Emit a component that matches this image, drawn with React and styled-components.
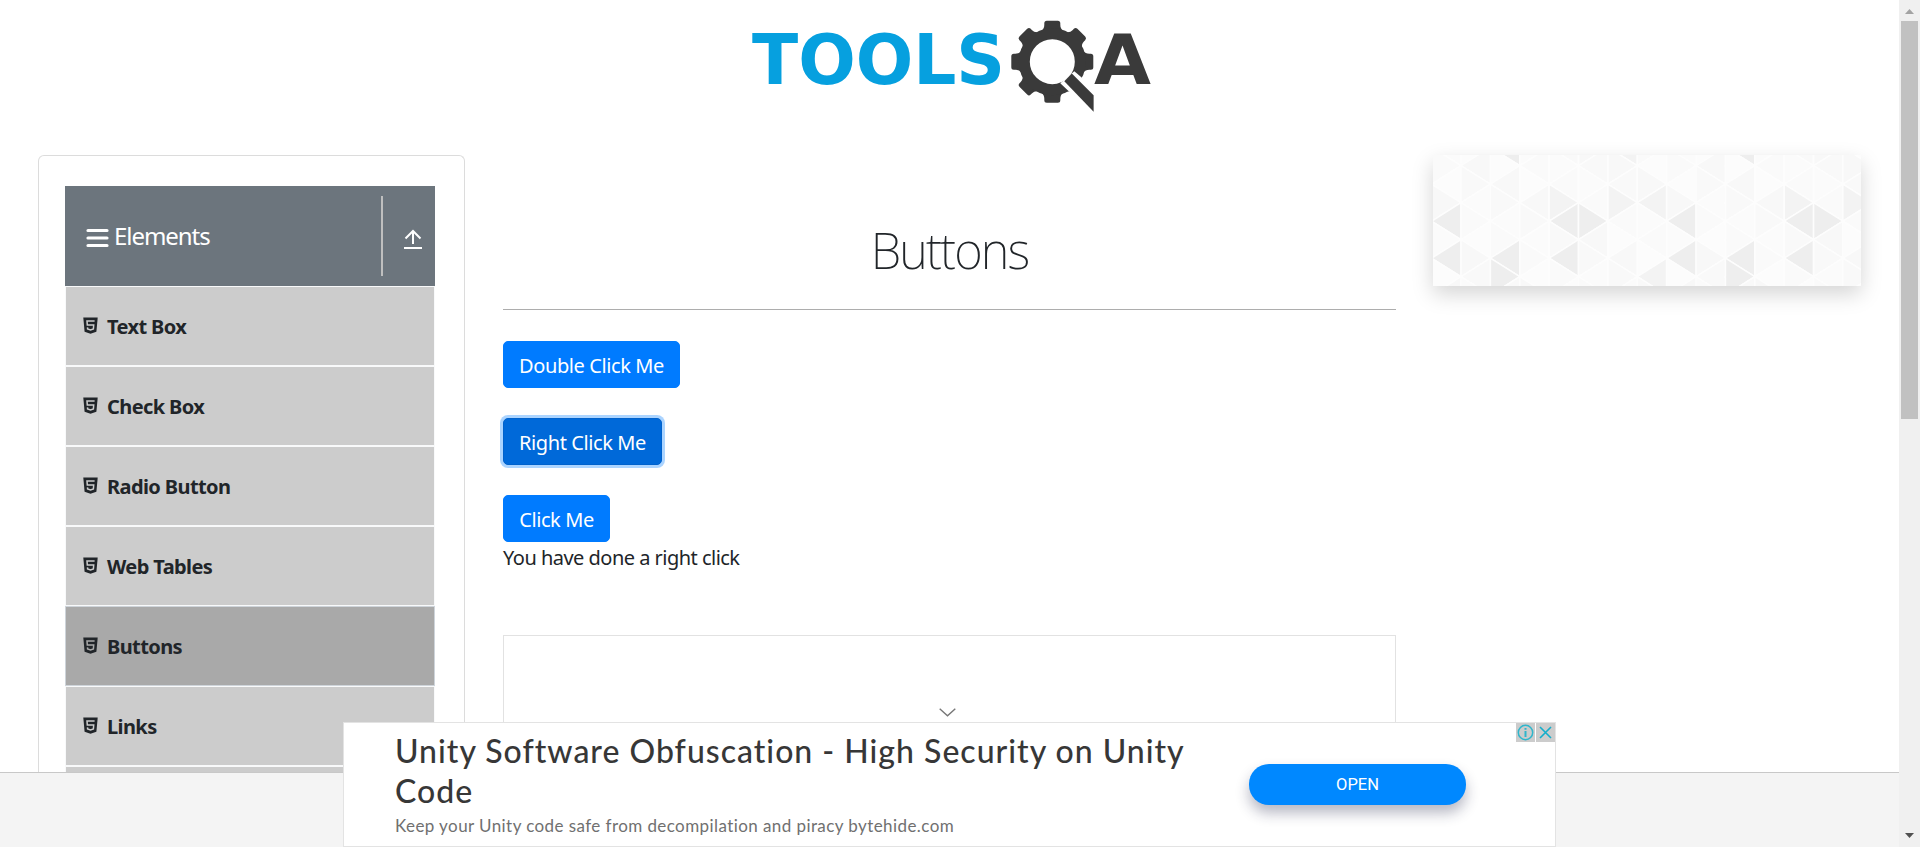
import React from 'react';
import styled, { createGlobalStyle } from 'styled-components';

const GlobalStyle = createGlobalStyle`
  * { box-sizing: border-box; }
  html, body { margin: 0; height: 100%; overflow: hidden; }
  body {
    background: #fff;
    color: #212529;
    font: 400 20px/30px 'Noto Sans', 'Open Sans', sans-serif;
  }
`;

const Screen = styled.div`
  display: flex;
  width: 1920px;
  height: 847px;
  overflow: hidden;
`;

const Page = styled.div`
  position: relative;
  flex: 1;
  display: flex;
  flex-direction: column;
  min-width: 0;
`;

const Header = styled.header`
  flex: none;
  height: 155px;
  padding: 15px 0 0 746px;
  svg { display: block; }
`;

const Columns = styled.div`
  flex: none;
  height: 617px;
  display: flex;
  align-items: flex-start;
  padding: 0 38px;
`;

const SideCard = styled.aside`
  width: 427px;
  height: 617px;
  padding: 30px 29px 0 26px;
  border: 1px solid #dcdcdc;
  border-bottom: 0;
  border-radius: 6px 6px 0 0;
  overflow: hidden;
`;

const GroupHeader = styled.div`
  display: flex;
  width: 370px;
  height: 100px;
  padding: 10px 0;
  background: #6c757d;
  color: #fff;
`;

const GroupTitle = styled.div`
  flex: 1;
  display: flex;
  align-items: center;
  padding: 0 0 1px 21px;
  border-right: 2px solid #bfbfbf;
  font-size: 24px;
  letter-spacing: -1.05px;
  svg { margin: 4px 5px 0 0; }
`;

const GroupArrow = styled.div`
  width: 52px;
  padding: 32px 0 0 19px;
`;

const MenuList = styled.ul`
  width: 370px;
  margin: 0;
  padding: 0;
  list-style: none;
`;

const MenuItem = styled.li`
  display: flex;
  align-items: center;
  height: 80px;
  padding: 2px 0 0 17px;
  border: 1px solid ${(p) => (p.$active ? '#ced4da' : '#f8f9fa')};
  background: ${(p) => (p.$active ? '#a9a9a9' : '#ccc')};
  font-weight: 700;
  letter-spacing: -0.6px;
  svg { margin: 0 9px 4px 0; }
`;

const Main = styled.main`
  width: 893px;
  height: 617px;
  margin-left: 38px;
  display: flex;
  flex-direction: column;
  align-items: flex-start;
`;

const Title = styled.h1`
  width: 100%;
  height: 155px;
  margin: 0;
  padding: 65px 0 0;
  border-bottom: 1px solid #adadad;
  text-align: center;
  font-size: 49px;
  line-height: 60px;
  font-weight: 200;
  letter-spacing: -1.9px;
`;

const PrimaryButton = styled.button`
  width: ${(p) => p.$width}px;
  height: 47px;
  margin: ${(p) => p.$gap}px 0 0;
  padding: 2px 0 0;
  border: 1px solid ${(p) => (p.$focus ? '#0062cc' : '#007bff')};
  border-radius: 5px;
  background: ${(p) => (p.$focus ? '#0069d9' : '#007bff')};
  box-shadow: ${(p) => (p.$focus ? '0 0 0 3px rgba(0, 123, 255, .33)' : 'none')};
  color: #fff;
  font: inherit;
  letter-spacing: -0.4px;
  white-space: nowrap;
`;

const Message = styled.p`
  margin: 1px 0 0;
  letter-spacing: -0.52px;
`;

const AdSlot = styled.div`
  width: 100%;
  flex: 1;
  margin-top: 62px;
  padding: 72px 0 0 435px;
  border: 1px solid #e2e2e2;
  border-bottom: 0;
  svg { display: block; }
`;

const Banner = styled.div`
  width: 428px;
  height: 131px;
  margin-left: 37px;
  background: #fff;
  box-shadow: 0 8px 20px rgba(0, 0, 0, .17);
  svg { display: block; }
`;

const Footer = styled.footer`
  flex: 1;
  border-top: 1px solid #c8c8c8;
  background: #f4f4f4;
`;

const StickyAd = styled.section`
  position: absolute;
  left: 343px;
  top: 722px;
  width: 1213px;
  height: 125px;
  display: flex;
  border: 1px solid #e3e3e3;
  background: #fff;
  font-family: Lato, sans-serif;
`;

const AdCopy = styled.div`
  width: 905px;
  padding: 8px 0 0 51px;
`;

const AdTitle = styled.div`
  height: 80px;
  color: #373737;
  font-size: 32px;
  line-height: 40px;
  font-weight: 500;
  letter-spacing: 1px;
  white-space: nowrap;
`;

const AdText = styled.div`
  color: #707070;
  font-size: 17px;
  line-height: 30px;
  letter-spacing: 0.42px;
  white-space: nowrap;
`;

const OpenButton = styled.button`
  width: 217px;
  height: 41px;
  margin-top: 41px;
  padding: 0;
  border: 0;
  border-radius: 20px;
  background: #08f;
  box-shadow: 0 8px 14px rgba(30, 35, 70, .32);
  color: #fff;
  font: 400 16.5px/41px Roboto, sans-serif;
  letter-spacing: 0;
`;

const AdBadges = styled.div`
  display: flex;
  gap: 1px;
  margin-left: auto;
`;

const Badge = styled.span`
  display: flex;
  align-items: center;
  justify-content: center;
  width: 19px;
  height: 19px;
  background: #ccc;
`;

const Scrollbar = styled.div`
  width: 21px;
  display: flex;
  flex-direction: column;
  align-items: center;
  justify-content: space-between;
  background: #f0f0f0;
`;

const ScrollThumb = styled.div`
  width: 17px;
  height: 398px;
  margin-bottom: auto;
  background: #c1c1c1;
`;

const ScrollArrow = styled.svg`
  display: block;
  width: 9px;
  height: 5px;
  margin: ${(p) => p.$margin};
`;

function Logo() {
  const teeth = [0, 45, 90, 135, 180, 225, 270, 315];
  return (
    <svg width="412" height="100" viewBox="746 15 412 100">
      <g fontFamily="DejaVu Sans" fontWeight="700" fontSize="70">
        <text x="752" y="84" fill="#06a0df" textLength="253" lengthAdjust="spacingAndGlyphs">TOOLS</text>
        <text x="1094" y="84" fill="#3a3a3a" textLength="57" lengthAdjust="spacingAndGlyphs">A</text>
      </g>
      <g transform="translate(1052.3 61.7)" fill="#3a3a3a">
        {teeth.map((a) => (
          <path key={a} transform={`rotate(${a})`} d="M-11 -31 Q-8 -33 -8 -37 V-38.5 Q-8 -41 -5.5 -41 H5.5 Q8 -41 8 -38.5 V-37 Q8 -33 11 -31 Z" />
        ))}
        <circle r="28" fill="none" stroke="#3a3a3a" strokeWidth="11" />
        <path d="M8 21.5 L22 9.5 L32 18 L43 30 V51 L17 30 Z" fill="#fff" />
        <path d="M12 19.5 L19.5 11.8 L41.3 33.5 V50 Z" />
      </g>
    </svg>
  );
}

function Html5Icon({ cut }) {
  return (
    <svg width="15" height="17" viewBox="0 0 15 17">
      <path d="M.3 .5H14.7L13.4 14.8L7.5 16.7L1.6 14.8Z" fill="#212529" />
      <path d="M11.6 4H4L4.3 8H10.7L10.4 11.9L7.5 12.9L4.6 11.9L4.5 10.4" fill="none" stroke={cut} strokeWidth="1.5" />
    </svg>
  );
}

const DARK = new Set(['-1L66', '-1L103', '3L66', '4R66', '7L66', '11L66', '12R66', '1L103', '3L103', '7L103', '9L103', '11L103', '1R122', '9R122', '1L-8', '9L-8']);
const MID = new Set(['5R48', '6L48', '6L122', '5L-8', '13R48', '3R48', '11R48']);
const SHADES = ['#fcfcfc', '#f9f9f9', '#fafafa', '#f8f8f8', '#fbfbfb'];

function Triangles() {
  const items = [];
  const lineX = (k) => 28 + 29.38 * k;
  for (let k = -1; k < 14; k += 1) {
    for (let j = -1; j < 8; j += 1) {
      const y = 10.7 + j * 18.5;
      const left = (k + j) % 2 === 0;
      const apex = left ? lineX(k) : lineX(k + 1);
      const base = left ? lineX(k + 1) : lineX(k);
      const key = `${k}${left ? 'L' : 'R'}${Math.round(y)}`;
      let fill = SHADES[(((k + 8) % 8) * 7 + (j + 1) * 3) % 5];
      if (MID.has(key)) fill = '#f3f3f3';
      if (DARK.has(key)) fill = '#eeeeee';
      items.push(<path key={key} d={`M${apex} ${y}L${base} ${y - 18.5}V${y + 18.5}Z`} fill={fill} />);
    }
  }
  return (
    <svg width="428" height="131" viewBox="0 0 428 131" stroke="#fdfdfd" strokeWidth="1.5" strokeLinejoin="round">
      {items}
    </svg>
  );
}

const MENU = ['Text Box', 'Check Box', 'Radio Button', 'Web Tables', 'Buttons', 'Links'];

export default function App() {
  return (
    <Screen>
      <GlobalStyle />
      <Page>
        <Header><Logo /></Header>
        <Columns>
          <SideCard>
            <GroupHeader>
              <GroupTitle>
                <svg width="23" height="20" viewBox="0 0 23 20" stroke="#fff" strokeWidth="3.2" strokeLinecap="round">
                  <path d="M2 2.5H21M2 10H21M2 17.5H21" />
                </svg>
                Elements
              </GroupTitle>
              <GroupArrow>
                <svg width="22" height="22" viewBox="0 0 22 22" fill="none" stroke="#fff" strokeWidth="2">
                  <path d="M2 20H20M11 16V3M3.5 10.5L11 3L18.5 10.5" />
                </svg>
              </GroupArrow>
            </GroupHeader>
            <MenuList>
              {MENU.map((name) => (
                <MenuItem key={name} $active={name === 'Buttons'}>
                  <Html5Icon cut={name === 'Buttons' ? '#a9a9a9' : '#ccc'} />
                  {name}
                </MenuItem>
              ))}
              <MenuItem />
            </MenuList>
          </SideCard>
          <Main>
            <Title>Buttons</Title>
            <PrimaryButton $width={177} $gap={31}>Double Click Me</PrimaryButton>
            <PrimaryButton $width={159} $gap={30} $focus>Right Click Me</PrimaryButton>
            <PrimaryButton $width={107} $gap={30}>Click Me</PrimaryButton>
            <Message>You have done a right click</Message>
            <AdSlot>
              <svg width="17" height="9" viewBox="0 0 17 9" fill="none" stroke="#777" strokeWidth="1.4">
                <path d="M.7 .8L8.5 7.8L16.3 .8" />
              </svg>
            </AdSlot>
          </Main>
          <Banner><Triangles /></Banner>
        </Columns>
        <Footer />
        <StickyAd>
          <AdCopy>
            <AdTitle>Unity Software Obfuscation - High Security on Unity<br />Code</AdTitle>
            <AdText>Keep your Unity code safe from decompilation and piracy bytehide.com</AdText>
          </AdCopy>
          <OpenButton>OPEN</OpenButton>
          <AdBadges>
            <Badge>
              <svg width="17" height="17" viewBox="0 0 17 17" fill="none" stroke="#2fb6cc" strokeWidth="1.5">
                <circle cx="8.5" cy="8.5" r="7.2" />
                <path d="M8.5 7V13M8.5 4V5.8" strokeWidth="2" />
              </svg>
            </Badge>
            <Badge>
              <svg width="15" height="15" viewBox="0 0 15 15" fill="none" stroke="#14aecb" strokeWidth="1.6">
                <path d="M2 2L13 13M13 2L2 13" />
              </svg>
            </Badge>
          </AdBadges>
        </StickyAd>
      </Page>
      <Scrollbar>
        <ScrollArrow $margin="9px 0 7px" viewBox="0 0 9 5"><path d="M0 5L4.5 0L9 5Z" fill="#a3a3a3" /></ScrollArrow>
        <ScrollThumb />
        <ScrollArrow $margin="0 0 9px" viewBox="0 0 9 5"><path d="M0 0H9L4.5 5Z" fill="#505050" /></ScrollArrow>
      </Scrollbar>
    </Screen>
  );
}
